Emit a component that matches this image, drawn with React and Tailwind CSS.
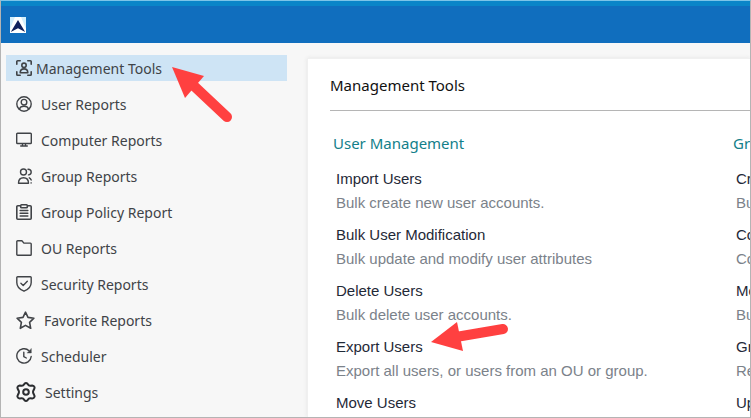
const iconProps = {
  viewBox: "0 0 16 16",
  fill: "none",
  stroke: "currentColor",
  strokeWidth: 1.4,
  strokeLinecap: "round",
  strokeLinejoin: "round",
  "aria-hidden": true,
};

function ToolsIcon() {
  return (
    <svg {...iconProps} strokeWidth={1.6} className="size-4 shrink-0">
      <path d="M.8 4.200V1.600a.8.8 0 0 1 .8-.8h2.600M11.800.8h2.600a.8.8 0 0 1 .8.8v2.600M.8 11.800v2.600a.8.8 0 0 0 .8.8h2.600M11.800 15.200h2.600a.8.8 0 0 0 .8-.8v-2.600" />
      <circle cx="8" cy="5.300" r="2.200" />
      <path d="M4.200 12.800c0-2.500 1.400-3.900 3.800-3.900s3.800 1.400 3.800 3.900z" />
    </svg>
  );
}

function UserIcon() {
  return (
    <svg {...iconProps} className="size-4 shrink-0">
      <circle cx="8" cy="8" r="7.200" />
      <circle cx="8" cy="6.200" r="2.800" />
      <path d="M3.300 13.200C4 11.200 5.700 10.300 8 10.300s4 .9 4.700 2.900" />
    </svg>
  );
}

function ComputerIcon() {
  return (
    <svg {...iconProps} className="size-4 shrink-0">
      <path d="M1.500 1.200h13a.8.8 0 0 1 .8.8v8.700a.8.8 0 0 1-.8.8h-13a.8.8 0 0 1-.8-.8V2a.8.8 0 0 1 .8-.8zM6.500 11.500v2.300M9.500 11.500v2.300M4.700 14h6.600" />
    </svg>
  );
}

function GroupIcon() {
  return (
    <svg {...iconProps} className="size-4 shrink-0">
      <circle cx="7.500" cy="4" r="3" />
      <path d="M2.500 15.200c0-3.400 1.800-5.400 5-5.400s5 2 5 5.400zM12 1.200c1.800 0 3.200 1.100 3.200 2.800S14 6.800 12.500 6.900M13.300 9.800c.9.4 1.500 1.100 1.900 2.200M15 14.900h.3" />
    </svg>
  );
}

function PolicyIcon() {
  return (
    <svg {...iconProps} strokeWidth={1.6} className="size-4 shrink-0">
      <path d="M4.500 1.800H1.800a1 1 0 0 0-1 1v11.400a1 1 0 0 0 1 1h12.400a1 1 0 0 0 1-1V2.800a1 1 0 0 0-1-1h-2.700M5.500.8h5a.8.8 0 0 1 .8.8v1.300a.8.8 0 0 1-.8.8h-5a.8.8 0 0 1-.8-.8V1.600a.8.8 0 0 1 .8-.8zM4.200 6.500h7.600M4.200 9.200h7.600M4.200 12h7.600" />
    </svg>
  );
}

function FolderIcon() {
  return (
    <svg {...iconProps} className="size-4 shrink-0">
      <path d="M.8 14.400V1.600a.8.8 0 0 1 .8-.8h4.300l2 2.300h6.500a.8.8 0 0 1 .8.8v10.500a.8.8 0 0 1-.8.8H1.600a.8.8 0 0 1-.8-.8z" />
    </svg>
  );
}

function SecurityIcon() {
  return (
    <svg {...iconProps} className="size-4 shrink-0">
      <path d="M1.600.8h12.800a.8.8 0 0 1 .8.8v4.900c0 4-2.900 7-7.200 8.700C3.700 13.500.8 10.500.8 6.500V1.600a.8.8 0 0 1 .8-.8zM4.900 7.300l2.300 2.200 4.100-4.200" />
    </svg>
  );
}

function StarIcon() {
  return (
    <svg {...iconProps} viewBox="0 0 19 19" strokeWidth={1.6} className="size-[19px] shrink-0">
      <path d="M9.500 1.200l2.500 5.200 5.900.8-4.300 4.100 1.100 6-5.200-2.900-5.200 2.900 1.100-6L1.100 7.200 7 6.400z" />
    </svg>
  );
}

function ClockIcon() {
  return (
    <svg {...iconProps} className="size-4 shrink-0">
      <path d="M13 2.700A7.200 7.200 0 1 0 15.200 8.500M7.800 4.200v4.500l2.500 1.300" />
      <path d="M15.300.8v4.200h-4z" fill="currentColor" strokeWidth={0.4} />
    </svg>
  );
}

function SettingsIcon() {
  return (
    <svg {...iconProps} viewBox="0 0 20 20" strokeWidth={2} className="size-5 shrink-0 text-[#2b2d30]">
      <path d="M8.500 1.800Q10 .2 11.500 1.800L13 3.500q.6.400 1.300.300l2-.3q1.700.1 2.200 1.700.3.800-.2 1.500L17.200 9q-.4 1 0 2l1.100 2.300q.5.700.2 1.500-.5 1.600-2.200 1.700l-2-.3q-.7-.1-1.300.3l-1.500 1.700q-1.500 1.600-3 0L7 16.500q-.6-.4-1.300-.3l-2 .3q-1.700-.1-2.200-1.700-.3-.8.2-1.500L2.800 11q.4-1 0-2L1.700 6.700q-.5-.7-.2-1.500.5-1.600 2.200-1.700l2 .3q.7.100 1.300-.3z" />
      <circle cx="10" cy="10" r="2.800" />
    </svg>
  );
}

const navItems = [
  { label: "User Reports", icon: UserIcon },
  { label: "Computer Reports", icon: ComputerIcon },
  { label: "Group Reports", icon: GroupIcon },
  { label: "Group Policy Report", icon: PolicyIcon },
  { label: "OU Reports", icon: FolderIcon },
  { label: "Security Reports", icon: SecurityIcon },
  { label: "Favorite Reports", icon: StarIcon },
  { label: "Scheduler", icon: ClockIcon },
  { label: "Settings", icon: SettingsIcon },
];

const userTools = [
  { title: "Import Users", text: "Bulk create new user accounts." },
  { title: "Bulk User Modification", text: "Bulk update and modify user attributes" },
  { title: "Delete Users", text: "Bulk delete user accounts." },
  { title: "Export Users", text: "Export all users, or users from an OU or group." },
  { title: "Move Users" },
];

const groupTools = [
  { title: "Cr", text: "Bu" },
  { title: "Co", text: "Co" },
  { title: "Mo", text: "Bu" },
  { title: "Gr", text: "Re" },
  { title: "Up" },
];

function ToolColumn({ heading, tools }) {
  return (
    <section className="w-[400px] shrink-0">
      <h2 className="font-['Noto_Sans',sans-serif] text-[15px] leading-6 text-[#13808a]">{heading}</h2>
      <ul className="mt-3 flex flex-col gap-2 pl-[3px] text-[15px] leading-6">
        {tools.map((tool) => (
          <li key={tool.title}>
            <a href="#" className="block text-[#1f2937]">{tool.title}</a>
            {tool.text && <p className="text-[#7b828a]">{tool.text}</p>}
          </li>
        ))}
      </ul>
    </section>
  );
}

export default function App() {
  return (
    <div className="relative flex h-screen flex-col overflow-hidden border border-[#b4b4b4] border-t-[#7cc4e8] bg-[#f7f7f7] font-['Liberation_Sans',sans-serif]">
      {/* Title bar */}
      <header className="flex h-[42px] shrink-0 items-center border-t-5 border-[#0a85c8] bg-[#106ebe] px-[9px]">
        <svg viewBox="0 0 16 16" className="size-4" aria-hidden="true">
          <path d="M0 0h16v16H0z" fill="#fff" />
          <path d="M0 0h5L0 12zM11 0h5v12z" fill="#d3effc" />
          <path d="M8 3L15.200 15 8 11.200.8 15z" fill="#10205c" />
        </svg>
      </header>

      <div className="flex min-h-0 flex-1">
        {/* Sidebar */}
        <nav className="w-[306px] shrink-0 pt-3 pr-5 pl-[5px] font-['Noto_Sans',sans-serif] text-[14px] text-[#404347]">
          <a href="#" className="flex h-[26px] items-center gap-1 bg-[#cee4f5] pl-[10px]">
            <ToolsIcon />
            Management Tools
          </a>
          <div className="mt-[5px] flex flex-col">
            {navItems.map(({ label, icon: Icon }) => (
              <a key={label} href="#" className="flex h-9 items-center gap-[9px] pl-[10px]">
                <Icon />
                {label}
              </a>
            ))}
          </div>
        </nav>

        {/* Content panel */}
        <main className="mt-[15px] min-w-0 flex-1 border-t border-l border-[#f0f0f0] bg-white pl-[22px] shadow-[0_0_4px_#e4e4e4]">
          <h1 className="border-b border-[#b5b5b5] pt-[14px] pb-[13px] font-['Noto_Sans',sans-serif] text-[15px] leading-6 text-[#111]">
            Management Tools
          </h1>
          <div className="flex pt-5 pl-[3px]">
            <ToolColumn heading="User Management" tools={userTools} />
            <ToolColumn heading="Gr" tools={groupTools} />
          </div>
        </main>
      </div>

      {/* Pointer arrows */}
      <svg viewBox="0 0 62 56" className="absolute top-[66px] left-[171px] h-14 w-[62px]" aria-hidden="true">
        <path d="M22 19L55 50" stroke="#ff4040" strokeWidth="10" strokeLinecap="round" />
        <path d="M0 0L32 9 13 31z" fill="#ff4040" />
      </svg>
      <svg viewBox="0 0 78 32" className="absolute top-[321px] left-[430px] h-8 w-[78px]" aria-hidden="true">
        <path d="M25 15L72 7" stroke="#ff4040" strokeWidth="10" strokeLinecap="round" />
        <path d="M0 20L26 0 32 29z" fill="#ff4040" />
      </svg>
    </div>
  );
}
